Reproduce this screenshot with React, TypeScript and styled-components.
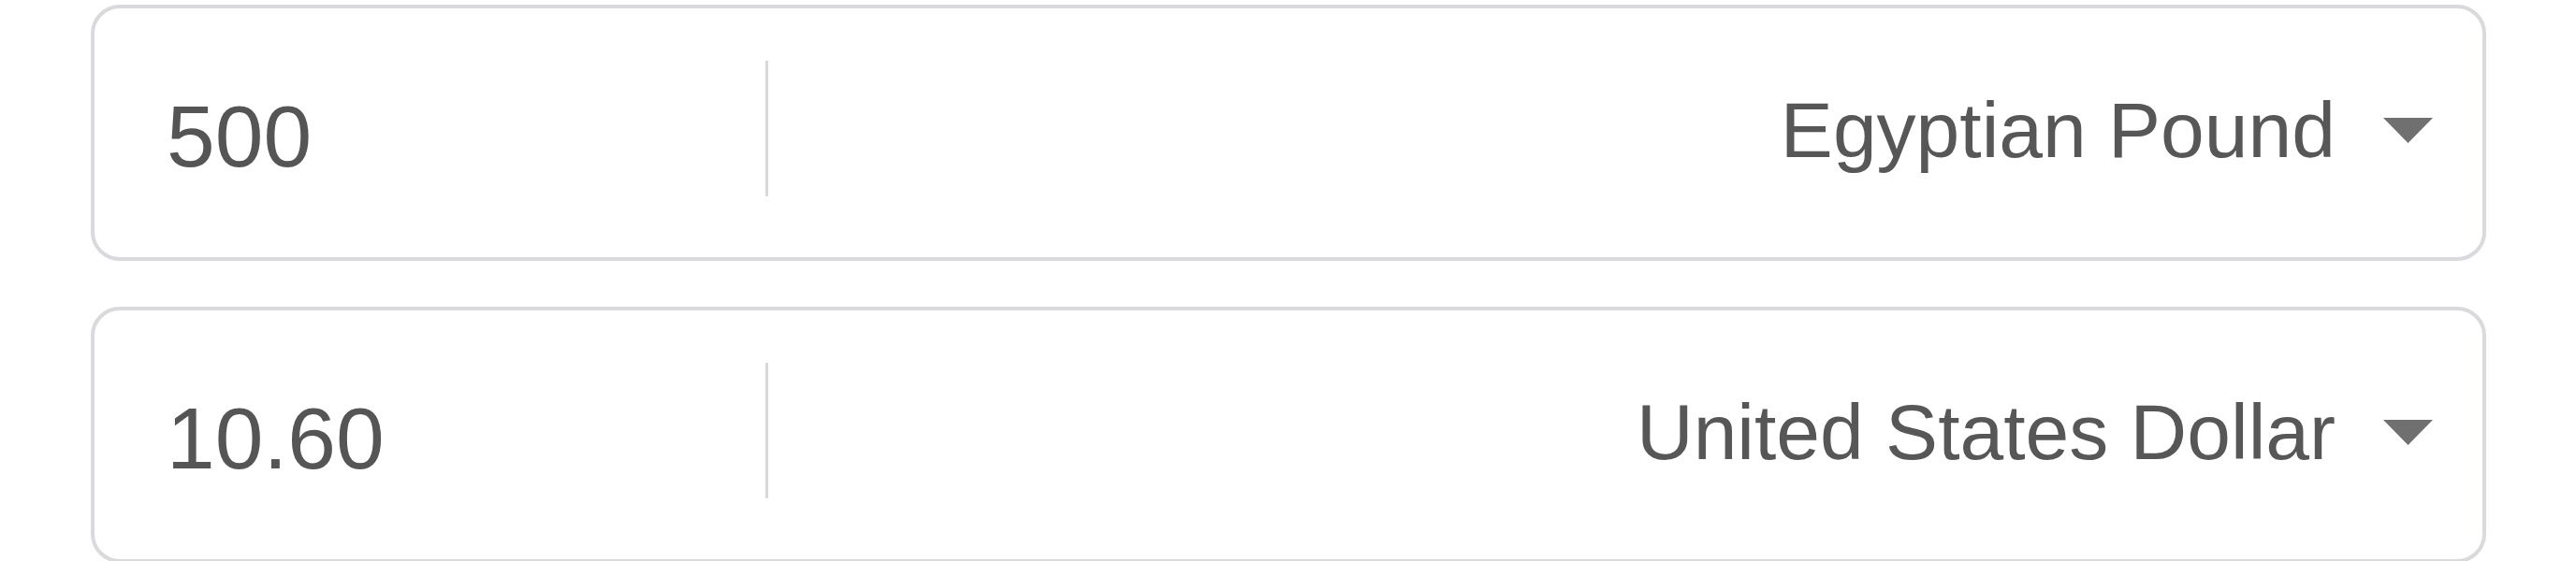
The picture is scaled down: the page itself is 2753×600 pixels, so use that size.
import React from "react";
import styled, { createGlobalStyle } from "styled-components";

const GlobalStyle = createGlobalStyle`
  html, body {
    margin: 0;
    padding: 0;
    background: #ffffff;
  }
  body {
    font-family: "Liberation Sans", Arial, Helvetica, sans-serif;
  }
`;

const Page = styled.div`
  display: flex;
  flex-direction: column;
  gap: 49px;
  padding: 5px 96px 0 97px;
`;

const ConverterRow = styled.div`
  display: flex;
  align-items: center;
  height: 274px;
  box-sizing: border-box;
  border: 4px solid #dadade;
  border-radius: 31px;
  background: #ffffff;
  flex-shrink: 0;
`;

const Amount = styled.div`
  width: 717px;
  box-sizing: border-box;
  padding-left: 77px;
  padding-top: 8px;
  font-size: 93px;
  line-height: 1;
  color: #555555;
`;

const Divider = styled.div`
  align-self: flex-start;
  margin-top: 56px;
  width: 3px;
  height: 145px;
  background: #d9d9d9;
  flex-shrink: 0;
`;

const CurrencySelect = styled.div`
  flex: 1;
  align-self: stretch;
  display: flex;
  align-items: center;
  justify-content: flex-end;
  gap: 51px;
  padding-right: 53px;
`;

const CurrencyName = styled.span`
  font-size: 84px;
  line-height: 1;
  color: #575757;
  margin-bottom: 6px;
  white-space: nowrap;
`;

const Caret = styled.svg`
  width: 53px;
  height: 27px;
  margin-bottom: 6px;
  flex-shrink: 0;
`;

const rows = [
  { amount: "500", currency: "Egyptian Pound" },
  { amount: "10.60", currency: "United States Dollar" },
];

export default function App() {
  return (
    <>
      <GlobalStyle />
      <Page>
        {rows.map((r) => (
          <ConverterRow key={r.currency}>
            <Amount>{r.amount}</Amount>
            <Divider />
            <CurrencySelect>
              <CurrencyName>{r.currency}</CurrencyName>
              <Caret viewBox="0 0 53 27">
                <polygon points="0,0 53,0 26.5,27" fill="#707070" />
              </Caret>
            </CurrencySelect>
          </ConverterRow>
        ))}
      </Page>
    </>
  );
}
